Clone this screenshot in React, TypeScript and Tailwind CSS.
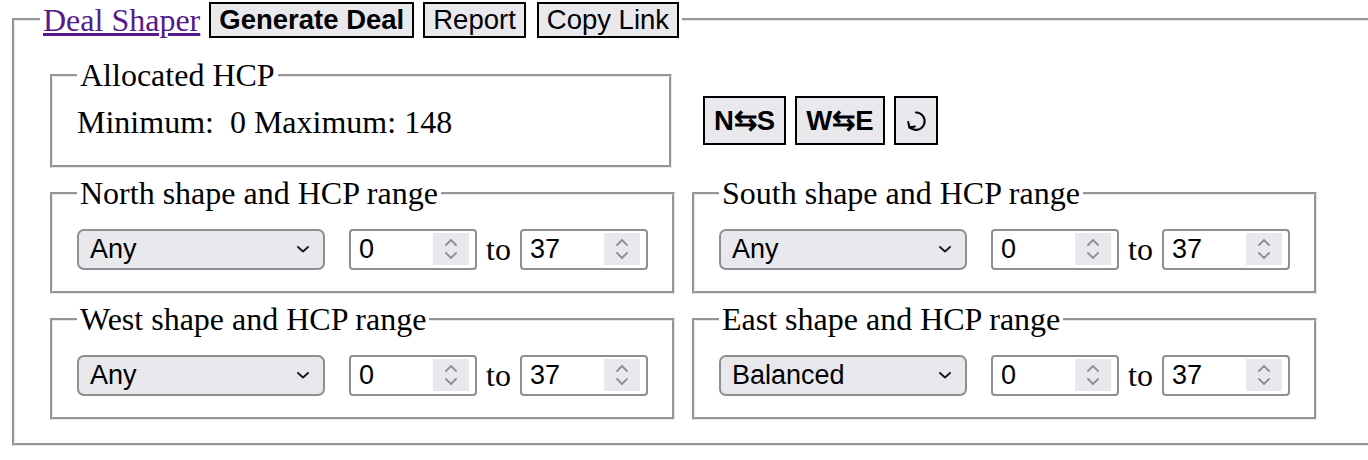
const serif = "font-['Liberation_Serif','Times_New_Roman',serif]";

function Chevron() {
  return (
    <svg width="14" height="10" viewBox="0 0 14 10" className="shrink-0">
      <path d="M2 3l5 4.5L12 3" fill="none" stroke="#1c1c1e" strokeWidth="2" strokeLinecap="round" strokeLinejoin="round" />
    </svg>
  );
}

function Spinner() {
  return (
    <div className="flex h-[32px] w-[36px] flex-col items-center justify-center gap-[4px] bg-[#e9e9ed]">
      <svg width="14" height="9" viewBox="0 0 14 9">
        <path d="M2 7l5-5 5 5" fill="none" stroke="#8e8e93" strokeWidth="1.8" strokeLinecap="round" strokeLinejoin="round" />
      </svg>
      <svg width="14" height="9" viewBox="0 0 14 9">
        <path d="M2 2l5 5 5-5" fill="none" stroke="#8e8e93" strokeWidth="1.8" strokeLinecap="round" strokeLinejoin="round" />
      </svg>
    </div>
  );
}

function NumberBox({ value }: { value: number }) {
  return (
    <div className="flex h-[41px] w-[128px] items-center justify-between rounded-[4px] border-2 border-[#8e8e93] bg-white pl-[8px] pr-[6px]">
      <span>{value}</span>
      <Spinner />
    </div>
  );
}

function SeatRange({ seat, shape }: { seat: string; shape: string }) {
  return (
    <fieldset className="border-[3px] border-[#e8e8ec] [border-style:groove] px-[24px] pb-[18px] pt-[13px]">
      <legend className={`${serif} px-[3px] text-[32px] leading-[37px]`}>{`${seat} shape and HCP range`}</legend>
      <div className="flex items-center font-['Liberation_Sans',Arial,sans-serif] text-[27px]">
        <div className="flex h-[41px] w-[248px] items-center justify-between rounded-[7px] border-2 border-[#8e8e93] bg-[#e9e9ed] pl-[11px] pr-[13px]">
          <span>{shape}</span>
          <Chevron />
        </div>
        <div className="ml-[24px]">
          <NumberBox value={0} />
        </div>
        <span className={`${serif} mx-[9px] text-[32px]`}>to</span>
        <NumberBox value={37} />
      </div>
    </fieldset>
  );
}

function RotateIcon() {
  return (
    <svg width="28" height="24" viewBox="0 0 26 22">
      <path d="M13 1.8a9.4 9.4 0 1 1-6.8 16" fill="none" stroke="#000" strokeWidth="2.3" strokeLinecap="round" />
      <path d="M4.6 12.2l1.3 6 5.8-1.2" fill="none" stroke="#000" strokeWidth="2.3" strokeLinecap="round" strokeLinejoin="round" />
    </svg>
  );
}

export default function App() {
  const btn =
    "flex items-center border-2 border-black bg-[#e9e9ed] px-[8px] font-['Liberation_Sans',Arial,sans-serif] text-[27.5px] leading-none text-black";

  return (
    <div className={`${serif} h-[460px] w-[1368px] overflow-hidden bg-white text-black`}>
      <fieldset className="ml-[12px] w-[1400px] border-[3px] border-[#e8e8ec] [border-style:groove] pb-[23px] pl-[25px] pt-[19px]">
        <legend className="flex h-[38px] items-end gap-[9px] px-[3px]">
          <a href="#" className="text-[32px] leading-[36px] text-[#551a8b] underline">
            Deal Shaper
          </a>
          <button className={`${btn} h-[36px] font-bold`}>Generate Deal</button>
          <button className={`${btn} h-[36px]`}>Report</button>
          <button className={`${btn} ml-[2px] h-[36px]`}>Copy Link</button>
        </legend>

        <div className="ml-[10px] grid grid-cols-[622px_621px] gap-x-[20px] gap-y-[7px]">
          <fieldset className="border-[3px] border-[#e8e8ec] [border-style:groove] px-[24px] pb-[24px] pt-[10px]">
            <legend className="px-[3px] text-[32px] leading-[37px]">Allocated HCP</legend>
            <div className="text-[32px] leading-[37px]">{"Minimum:\u00a0 0 Maximum: 148"}</div>
          </fieldset>
          <div className="flex items-start gap-[9px] pl-[11px] pt-[39px]">
            <button className={`${btn} h-[49px] px-[9px] font-bold`}>N⇆S</button>
            <button className={`${btn} h-[49px] px-[9px] font-bold`}>W⇆E</button>
            <button className={`${btn} h-[49px] w-[44px] justify-center px-0`}>
              <RotateIcon />
            </button>
          </div>

          <SeatRange seat="North" shape="Any" />
          <SeatRange seat="South" shape="Any" />
          <SeatRange seat="West" shape="Any" />
          <SeatRange seat="East" shape="Balanced" />
        </div>
      </fieldset>
    </div>
  );
}
